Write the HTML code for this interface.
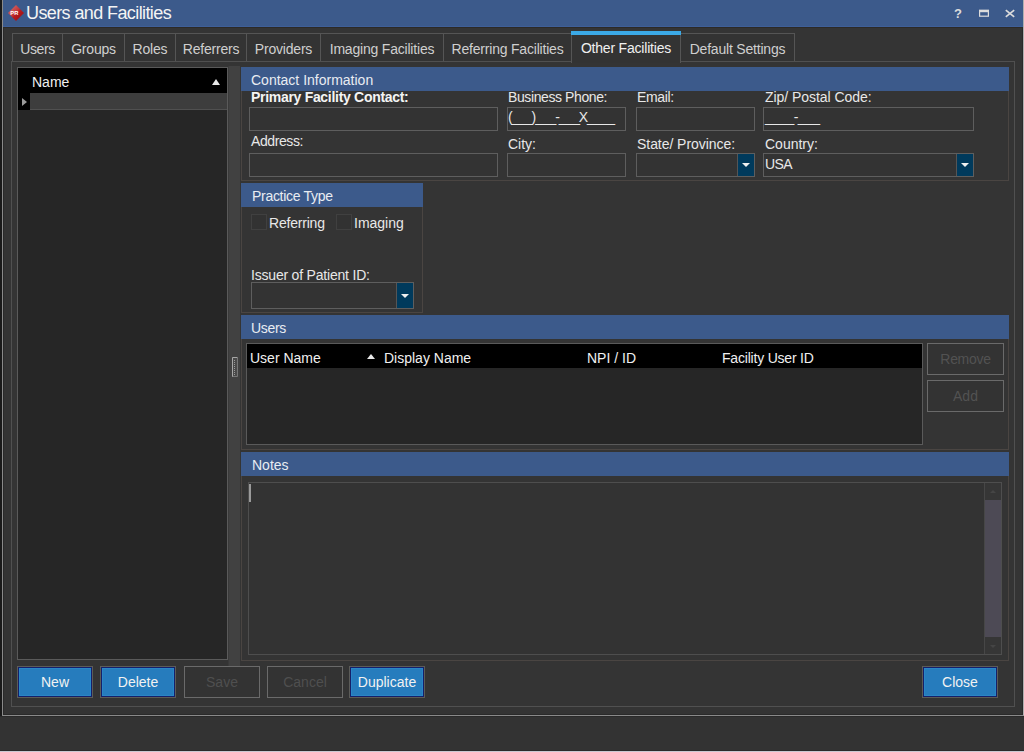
<!DOCTYPE html>
<html><head><meta charset="utf-8">
<style>
*{box-sizing:border-box;margin:0;padding:0}
html,body{width:1024px;height:752px;overflow:hidden;background:#333333;font-family:"Liberation Sans",sans-serif;color:#e6e6e6}
.a{position:absolute}
.t{position:absolute;white-space:nowrap;font-size:14px;line-height:16px;color:#e8e8e8}
#win{left:0;top:0;width:1024px;height:716px;background:#343434;border-left:2px solid #1a1a1a;box-shadow:inset 1px 0 0 #050505}
#winb{left:2px;top:0;width:1022px;height:716px;border-left:1px solid #8a8a8a;border-right:1px solid #b0b0b0;border-bottom:1px solid #8a8a8a}
#wini{left:3px;top:0;width:1020px;height:715px;border-left:1px solid #2a2a2a;border-right:1px solid #2a2a2a;border-bottom:1px solid #2a2a2a}
#title{left:3px;top:0;width:1020px;height:27px;background:#3c5a8b;border-bottom:1px solid #3f5f98}
.tab{position:absolute;top:33px;height:29px;border:1px solid #555;border-bottom:none;background:#333}
.tab span{position:absolute;top:7px;left:0;right:0;text-align:center;font-size:14px;line-height:16px;color:#cfcfcf;white-space:nowrap;letter-spacing:-0.2px}
#frame{left:11px;top:61px;width:1004px;height:646px;border:1px solid #505050}
.hdr{position:absolute;background:#3c5a8b}
.hdr span{position:absolute;left:10px;top:5px;font-size:14px;line-height:16px;color:#e8ecf2;white-space:nowrap;letter-spacing:-0.3px}
.grp{position:absolute;border:1px solid #4a4542}
.inp{position:absolute;border:1px solid #5e5e5e;background:#333;height:24px}
.dd{position:absolute;right:0;top:0;bottom:0;width:17px;background:#003a5c;border-left:1px solid #555}
.dd:after{content:"";position:absolute;left:4px;top:50%;margin-top:-2px;border-left:4px solid transparent;border-right:4px solid transparent;border-top:4px solid #f0f0f0}
.btn{position:absolute;top:666px;width:76px;height:32px;border:1px solid #6a6a6a;background:#333}
.btn span{position:absolute;left:0;right:0;top:7px;text-align:center;font-size:14px;line-height:16px;white-space:nowrap}
.btn.b{background:#267cbd;border-color:#5c5c58;box-shadow:inset 0 0 0 1px #14206a,inset 0 0 0 2px #2a86c6}
.btn.b span{color:#f2f2f2}
.btn.d span{color:#4f4f4f}
.cb{position:absolute;width:16px;height:16px;border:1px solid #404040;background:#323232}
</style></head><body>
<div id="win" class="a"></div>
<div id="winb" class="a"></div>
<div id="wini" class="a"></div>
<div class="a" style="left:3px;top:27px;width:1020px;height:1px;background:#2c2a27"></div>
<div class="a" style="left:0;top:716px;width:1024px;height:1px;background:#2a2a2a"></div>
<div class="a" style="left:0;top:750px;width:1024px;height:1px;background:#2b2b2b"></div>
<div class="a" style="left:0;top:751px;width:1024px;height:1px;background:#c9c9d2"></div>
<div id="title" class="a"></div>
<!-- app icon -->
<svg class="a" style="left:7px;top:4px" width="18" height="18" viewBox="0 0 18 18">
<defs><linearGradient id="ig" x1="0" y1="0" x2="1" y2="1"><stop offset="0" stop-color="#d27a7a"/><stop offset="0.45" stop-color="#c63a3c"/><stop offset="0.55" stop-color="#b81a1e"/><stop offset="1" stop-color="#8e0c10"/></linearGradient></defs>
<polygon points="9,1 17,9 9,17 1,9" fill="url(#ig)"/>
<text x="7.3" y="11.2" font-family="Liberation Sans" font-size="5.8" font-weight="700" fill="#fff" text-anchor="middle">PR</text>
</svg>
<div class="t" style="left:26px;top:3px;font-size:18px;line-height:20px;color:#f4f4f4;letter-spacing:-0.6px">Users and Facilities</div>
<!-- title controls -->
<div class="t" style="left:954px;top:6px;font-size:13px;font-weight:700;color:#dcdcdc">?</div>
<svg class="a" style="left:978px;top:9px" width="12" height="9" viewBox="0 0 12 9"><rect x="1.6" y="1.4" width="8.8" height="5.8" fill="none" stroke="#dcdcdc" stroke-width="1.2"/><rect x="1" y="0.8" width="10" height="2.4" fill="#dcdcdc"/></svg>
<svg class="a" style="left:1005px;top:9px" width="10" height="9" viewBox="0 0 10 9"><path d="M0.8 1.2L9.2 7.8M9.2 1.2L0.8 7.8" stroke="#dcdcdc" stroke-width="1.7"/></svg>

<!-- tabs -->
<div class="tab" style="left:12px;width:51px"><span style="letter-spacing:-0.4px">Users</span></div>
<div class="tab" style="left:62px;width:63px"><span>Groups</span></div>
<div class="tab" style="left:124px;width:52px"><span>Roles</span></div>
<div class="tab" style="left:175px;width:72px"><span>Referrers</span></div>
<div class="tab" style="left:246px;width:75px"><span>Providers</span></div>
<div class="tab" style="left:320px;width:124px"><span>Imaging Facilities</span></div>
<div class="tab" style="left:443px;width:129px"><span>Referring Facilities</span></div>
<div class="tab" style="left:680px;width:115px"><span>Default Settings</span></div>

<div id="frame" class="a"></div>
<div class="tab" style="left:571px;top:31px;width:110px;height:32px;border-top:none;background:#333"><div class="a" style="left:-1px;top:0;width:110px;height:4px;background:#3ba9e6"></div><span style="top:9px;color:#f0f0f0">Other Facilities</span></div>

<!-- left list -->
<div class="a" style="left:17px;top:67px;width:211px;height:593px;border:1px solid #5a5a5a;background:#262626"></div>
<div class="a" style="left:18px;top:68px;width:209px;height:25px;background:#000"></div>
<div class="t" style="left:32px;top:74px;color:#f0f0f0">Name</div>
<div class="a" style="left:212px;top:79px;border-left:4.5px solid transparent;border-right:4.5px solid transparent;border-bottom:6px solid #e8e8e8"></div>
<div class="a" style="left:18px;top:93px;width:209px;height:17px;background:#3d3d3d;border-bottom:1px solid #505050"></div>
<div class="a" style="left:18px;top:93px;width:12px;height:17px;background:#000"></div>
<div class="a" style="left:22px;top:98px;border-top:4.5px solid transparent;border-bottom:4.5px solid transparent;border-left:5px solid #9a9a9a"></div>

<!-- splitter -->
<div class="a" style="left:228px;top:66px;width:12px;height:600px;background:#414141;border-left:1px solid #3a3a3a"></div>
<svg class="a" style="left:232px;top:357px" width="6" height="20" viewBox="0 0 6 20"><rect x="0" y="0" width="6" height="20" fill="#4a4a4a"/><path d="M0.5 20V0.5H5.5" stroke="#a8a8a8" fill="none"/><path d="M5.5 0.5V19.5H0.5" stroke="#777" fill="none"/><path d="M2.5 3V18" stroke="#9a9a9a" stroke-dasharray="1 1"/></svg>

<!-- Contact Information -->
<div class="grp" style="left:241px;top:67px;width:768px;height:114px"></div>
<div class="hdr" style="left:241px;top:67px;width:768px;height:24px"><span style="letter-spacing:0">Contact Information</span></div>
<div class="t" style="left:251px;top:88.5px;font-weight:700;color:#f4f4f4;letter-spacing:-0.3px">Primary Facility Contact:</div>
<div class="inp" style="left:249px;top:107px;width:249px"></div>
<div class="t" style="left:251px;top:133px;letter-spacing:-0.4px">Address:</div>
<div class="inp" style="left:249px;top:153px;width:249px"></div>
<div class="t" style="left:508px;top:89px;letter-spacing:-0.4px">Business Phone:</div>
<div class="inp" style="left:507px;top:107px;width:119px"></div>
<div class="t" style="left:508px;top:109px;letter-spacing:-1.1px">(___)___-___X____</div>
<div class="t" style="left:508px;top:136px">City:</div>
<div class="inp" style="left:507px;top:153px;width:119px"></div>
<div class="t" style="left:637px;top:89px;letter-spacing:-0.35px">Email:</div>
<div class="inp" style="left:636px;top:107px;width:119px"></div>
<div class="t" style="left:637px;top:136px;letter-spacing:-0.05px">State/ Province:</div>
<div class="inp" style="left:636px;top:153px;width:119px"><div class="dd"></div></div>
<div class="t" style="left:765px;top:89px;letter-spacing:-0.05px">Zip/ Postal Code:</div>
<div class="inp" style="left:763px;top:107px;width:211px"></div>
<div class="t" style="left:765px;top:109px;letter-spacing:-0.6px">____-___</div>
<div class="t" style="left:765px;top:136px">Country:</div>
<div class="inp" style="left:763px;top:153px;width:211px"><div class="dd"></div></div>
<div class="t" style="left:765px;top:156px;letter-spacing:-0.6px">USA</div>

<!-- Practice Type -->
<div class="grp" style="left:241px;top:183px;width:182px;height:130px"></div>
<div class="hdr" style="left:241px;top:183px;width:182px;height:24px"><span style="left:11px;top:5px">Practice Type</span></div>
<div class="cb" style="left:251px;top:214px"></div>
<div class="t" style="left:269px;top:215px;letter-spacing:-0.2px">Referring</div>
<div class="cb" style="left:336px;top:214px"></div>
<div class="t" style="left:354px;top:215px">Imaging</div>
<div class="t" style="left:251px;top:267px;letter-spacing:-0.2px">Issuer of Patient ID:</div>
<div class="inp" style="left:251px;top:282px;width:163px;height:27px"><div class="dd"></div></div>

<!-- Users -->
<div class="grp" style="left:241px;top:315px;width:768px;height:135px"></div>
<div class="hdr" style="left:241px;top:315px;width:768px;height:24px"><span>Users</span></div>
<div class="a" style="left:246px;top:343px;width:677px;height:102px;border:1px solid #5a5a5a;background:#262626"></div>
<div class="a" style="left:247px;top:344px;width:675px;height:24px;background:#000"></div>
<div class="t" style="left:250px;top:350px;color:#f0f0f0">User Name</div>
<div class="a" style="left:367px;top:354px;border-left:4.5px solid transparent;border-right:4.5px solid transparent;border-bottom:5px solid #e8e8e8"></div>
<div class="t" style="left:384px;top:350px;color:#f0f0f0">Display Name</div>
<div class="t" style="left:587px;top:350px;color:#f0f0f0">NPI / ID</div>
<div class="t" style="left:722px;top:350px;color:#f0f0f0;letter-spacing:-0.2px">Facility User ID</div>
<div class="btn d" style="left:927px;top:343px;width:77px;height:32px"><span style="top:7px;letter-spacing:-0.3px;color:#525252">Remove</span></div>
<div class="btn d" style="left:927px;top:380px;width:77px;height:32px"><span style="top:7px;color:#525252">Add</span></div>

<!-- Notes -->
<div class="grp" style="left:241px;top:452px;width:768px;height:209px"></div>
<div class="hdr" style="left:241px;top:452px;width:768px;height:24px"><span style="letter-spacing:0;left:11px">Notes</span></div>
<div class="a" style="left:248px;top:482px;width:754px;height:173px;border:1px solid #4e4e4e;background:#333"></div>
<div class="a" style="left:249px;top:484px;width:2px;height:18px;background:#9a9a9a"></div>
<div class="a" style="left:984px;top:483px;width:17px;height:171px;border-left:1px solid #474747;background:#4d4a55"></div>
<div class="a" style="left:985px;top:483px;width:16px;height:17px;background:#363636"></div>
<div class="a" style="left:990px;top:490px;border-left:3.5px solid transparent;border-right:3.5px solid transparent;border-bottom:3px solid #454545"></div>
<div class="a" style="left:985px;top:637px;width:16px;height:17px;background:#363636"></div>
<div class="a" style="left:990px;top:645px;border-left:3.5px solid transparent;border-right:3.5px solid transparent;border-top:3px solid #454545"></div>

<!-- bottom buttons -->
<div class="btn b" style="left:17px"><span>New</span></div>
<div class="btn b" style="left:100px"><span>Delete</span></div>
<div class="btn d" style="left:184px"><span>Save</span></div>
<div class="btn d" style="left:267px"><span>Cancel</span></div>
<div class="btn b" style="left:349px"><span>Duplicate</span></div>
<div class="btn b" style="left:922px"><span>Close</span></div>
</body></html>
